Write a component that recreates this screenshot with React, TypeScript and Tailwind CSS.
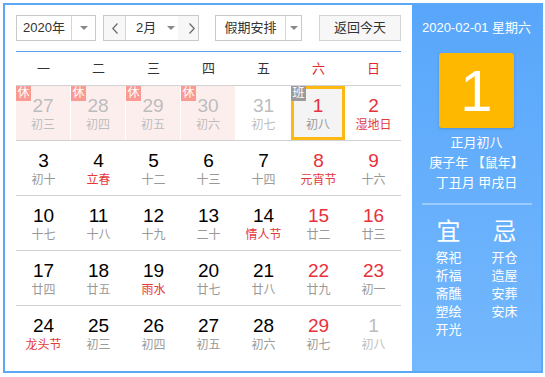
import clsx from 'clsx'

type Day = {
  d: number
  l: string
  out?: boolean
  rest?: boolean
  work?: boolean
  red?: boolean
  fest?: boolean
  sel?: boolean
}

const rows: Day[][] = [
  [
    { d: 27, l: '初三', out: true, rest: true },
    { d: 28, l: '初四', out: true, rest: true },
    { d: 29, l: '初五', out: true, rest: true },
    { d: 30, l: '初六', out: true, rest: true },
    { d: 31, l: '初七', out: true },
    { d: 1, l: '初八', red: true, sel: true, work: true },
    { d: 2, l: '湿地日', red: true, fest: true },
  ],
  [
    { d: 3, l: '初十' },
    { d: 4, l: '立春', fest: true },
    { d: 5, l: '十二' },
    { d: 6, l: '十三' },
    { d: 7, l: '十四' },
    { d: 8, l: '元宵节', red: true, fest: true },
    { d: 9, l: '十六', red: true },
  ],
  [
    { d: 10, l: '十七' },
    { d: 11, l: '十八' },
    { d: 12, l: '十九' },
    { d: 13, l: '二十' },
    { d: 14, l: '情人节', fest: true },
    { d: 15, l: '廿二', red: true },
    { d: 16, l: '廿三', red: true },
  ],
  [
    { d: 17, l: '廿四' },
    { d: 18, l: '廿五' },
    { d: 19, l: '雨水', fest: true },
    { d: 20, l: '廿七' },
    { d: 21, l: '廿八' },
    { d: 22, l: '廿九', red: true },
    { d: 23, l: '初一', red: true },
  ],
  [
    { d: 24, l: '龙头节', fest: true },
    { d: 25, l: '初三' },
    { d: 26, l: '初四' },
    { d: 27, l: '初五' },
    { d: 28, l: '初六' },
    { d: 29, l: '初七', red: true },
    { d: 1, l: '初八', out: true },
  ],
]

const weekdays = ['一', '二', '三', '四', '五', '六', '日']
const yi = ['祭祀', '祈福', '斋醮', '塑绘', '开光']
const ji = ['开仓', '造屋', '安葬', '安床']

function Caret(): React.JSX.Element {
  return (
    <svg width="8" height="4" viewBox="0 0 8 4" className="shrink-0">
      <path d="M0 0h8L4 4z" fill="#888" />
    </svg>
  )
}

function Chevron({ dir }: { dir: 'l' | 'r' }): React.JSX.Element {
  return (
    <svg width="6" height="11" viewBox="0 0 6 11" fill="none" stroke="#666" strokeWidth="1.2">
      {dir === 'l' ? <path d="M5.5 0.5 0.8 5.5l4.7 5" /> : <path d="M0.5 0.5l4.7 5-4.7 5" />}
    </svg>
  )
}

function Cell({ day }: { day: Day }): React.JSX.Element {
  const numColor = day.out ? 'text-[#bdbdbd]' : day.red ? 'text-[#e8313b]' : 'text-black'
  const lunarColor = day.out ? 'text-[#bdbdbd]' : day.fest ? 'text-[#e4393c]' : 'text-[#999]'
  return (
    <div
      className={clsx(
        'relative flex flex-col items-center',
        day.rest && 'bg-[#fdeeee] border-r border-white pt-[8px]',
        day.sel && 'border-[3px] border-[#fdb813] bg-[#f4f4f4] mr-px pt-[5px]',
        !day.rest && !day.sel && 'pt-[8px]'
      )}
    >
      {day.rest && (
        <span className="absolute left-0 top-0 w-[15px] h-[15px] bg-[#fb9a92] text-white text-[12px] leading-[15px] text-center">
          休
        </span>
      )}
      {day.work && (
        <span className="absolute -left-[3px] -top-[3px] w-[15px] h-[15px] bg-[#9b9b9b] text-white text-[12px] leading-[15px] text-center">
          班
        </span>
      )}
      <span className={clsx('text-[19px] leading-[23px]', numColor)}>{day.d}</span>
      <span className={clsx('text-[12px] leading-[16px]', lunarColor)}>{day.l}</span>
    </div>
  )
}

export default function App(): React.JSX.Element {
  return (
    <div className="w-[545px] h-[377px] bg-white p-[3px] font-['Liberation_Sans','Noto_Sans_CJK_SC',sans-serif]">
      <div className="flex w-[540px] h-[370px] border-2 border-[#5ba8f7]">
        {/* calendar */}
        <div className="w-[407px] pl-[11px] pt-[10px]">
          <div className="flex h-[26px] text-[13px] text-[#333]">
            <div className="flex w-[80px] border border-[#c9c9c9] bg-white">
              <span className="flex-1 flex items-center justify-center leading-[24px]">2020年</span>
              <span className="w-[24px] border-l border-[#d6d6d6] flex items-center justify-center">
                <Caret />
              </span>
            </div>
            <div className="flex w-[96px] ml-[7px] border border-[#c9c9c9] bg-white">
              <span className="w-[22px] border-r border-[#d6d6d6] bg-[#f7f7f7] flex items-center justify-center">
                <Chevron dir="l" />
              </span>
              <span className="flex-1 flex items-center pl-[10px] pr-[3px]">
                <span className="leading-[24px]">2月</span>
                <span className="ml-auto flex">
                  <Caret />
                </span>
              </span>
              <span className="w-[20px] bg-[#f7f7f7] flex items-center justify-end pr-[3px]">
                <Chevron dir="r" />
              </span>
            </div>
            <div className="flex w-[87px] ml-[16px] border border-[#c9c9c9] bg-white">
              <span className="flex-1 flex items-center justify-center leading-[24px]">假期安排</span>
              <span className="w-[16px] border-l border-[#d6d6d6] flex items-center justify-center">
                <Caret />
              </span>
            </div>
            <button className="w-[82px] ml-[17px] border border-[#d3d3d3] bg-[#f7f7f7] leading-[24px] text-[#333]">
              返回今天
            </button>
          </div>

          <div className="mt-[10px] w-[385px] h-px bg-[#5aa2f0]" />

          <div className="grid grid-cols-7 w-[385px] h-[33px] text-[13px]">
            {weekdays.map((w, i) => (
              <div
                key={w}
                className={clsx('flex items-center justify-center', i >= 5 ? 'text-[#e02828]' : 'text-[#333]')}
              >
                {w}
              </div>
            ))}
          </div>

          {rows.map((row, ri) => (
            <div key={ri} className="grid grid-cols-7 w-[385px] h-[55px] border-t border-[#d2d2d2]">
              {row.map((day, ci) => (
                <Cell key={ci} day={day} />
              ))}
            </div>
          ))}
        </div>

        {/* side panel */}
        <div className="flex-1 flex flex-col items-center bg-linear-to-b from-[#58a6fb] to-[#74b8fd] text-white pt-[14px]">
          <div className="text-[13px] leading-[18px] whitespace-nowrap">2020-02-01 星期六</div>
          <div className="mt-[16px] w-[75px] h-[75px] rounded-[3px] bg-[#ffb800] shadow-[0_1px_3px_rgba(0,0,0,0.15)] flex items-center justify-center">
            <span className="text-[58px] leading-[75px] font-['Liberation_Sans',sans-serif]">1</span>
          </div>
          <div className="mt-[5px] text-[13px] leading-[20px] text-center whitespace-nowrap">
            <div>正月初八</div>
            <div>庚子年 【鼠年】</div>
            <div>丁丑月 甲戌日</div>
          </div>
          <div className="mt-[10px] w-[110px] h-[2px] bg-white/35" />
          <div className="mt-[13px] flex gap-[8px]">
            <div className="w-[48px] flex flex-col items-center">
              <span className="text-[24px] leading-[28px]">宜</span>
              <div className="mt-[3px] text-[13px] leading-[18px] flex flex-col items-center">
                {yi.map((t) => (
                  <span key={t}>{t}</span>
                ))}
              </div>
            </div>
            <div className="w-[48px] flex flex-col items-center">
              <span className="text-[24px] leading-[28px]">忌</span>
              <div className="mt-[3px] text-[13px] leading-[18px] flex flex-col items-center">
                {ji.map((t) => (
                  <span key={t}>{t}</span>
                ))}
              </div>
            </div>
          </div>
        </div>
      </div>
    </div>
  )
}
